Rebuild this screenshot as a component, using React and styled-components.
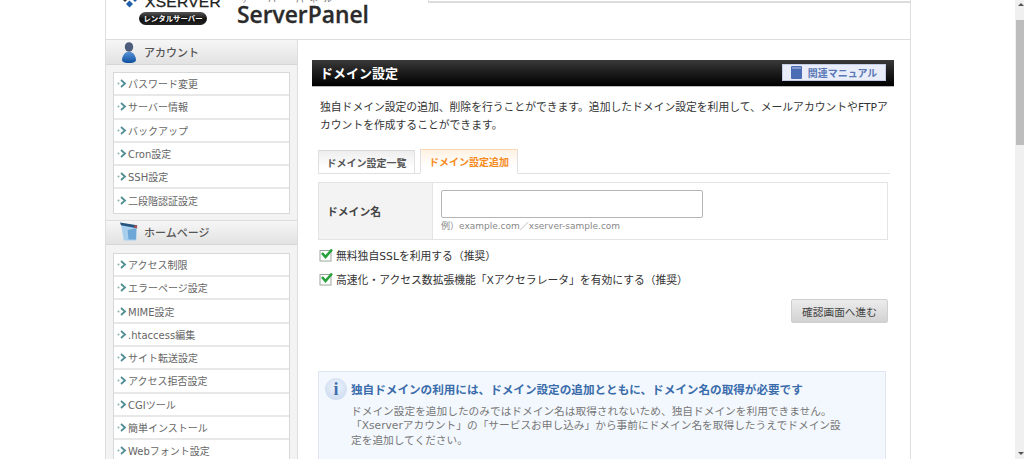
import styled, { createGlobalStyle } from "styled-components";

const GlobalStyle = createGlobalStyle`
  html, body {
    margin: 0;
    height: 100%;
    overflow: hidden;
    background: #fff;
  }
  body {
    font-family: "DejaVu Sans", "Noto Sans CJK JP", sans-serif;
    color: #333;
  }
`;

const Screen = styled.div`
  display: flex;
  width: 1024px;
  height: 459px;
  overflow: hidden;
`;

const Viewport = styled.div`
  flex: 1;
  padding-left: 105px;
  overflow: hidden;
`;

const Scrollbar = styled.div`
  position: relative;
  width: 9px;
  background: #f0f0f0;
`;

const ScrollThumb = styled.div`
  position: absolute;
  top: 20px;
  left: 1px;
  right: 0;
  height: 125px;
  background: #bdbdbd;
`;

const ScrollArrow = styled.div`
  position: absolute;
  left: 3px;
  ${(p) => (p.$down ? "bottom: 4px;" : "top: 3px;")}
  border-left: 3px solid transparent;
  border-right: 3px solid transparent;
  ${(p) => (p.$down ? "border-top: 3px solid #555;" : "border-bottom: 3px solid #555;")}
`;

const Page = styled.div`
  width: 806px;
  height: 459px;
  box-sizing: border-box;
  border-left: 1px solid #dedede;
  border-right: 1px solid #dedede;
  overflow: hidden;
`;

const Header = styled.header`
  position: relative;
  display: flex;
  align-items: flex-end;
  height: 40px;
  box-sizing: border-box;
  padding: 0 0 14px 16px;
  border-bottom: 1px solid #dcdcdc;
  overflow: hidden;
`;

const HeaderStrip = styled.div`
  position: absolute;
  top: 0;
  right: 0;
  width: 482px;
  height: 3px;
  box-sizing: border-box;
  background: #fff;
  border-left: 1px solid #ddd;
  border-bottom: 2px solid #dcdcdc;
`;

const XserverLogo = styled.div`
  display: flex;
  flex-direction: column;
  align-items: flex-start;
  width: 100px;
  margin-right: 15px;
`;

const LogoTop = styled.div`
  display: flex;
  align-items: flex-end;
  gap: 7px;
  height: 12px;
  margin-bottom: 4px;
`;

const LogoName = styled.span`
  font-family: "Liberation Sans", sans-serif;
  font-size: 15.5px;
  line-height: 12px;
  letter-spacing: 0.3px;
  color: #222;
  position: relative;
  top: 0;
  -webkit-text-stroke: 0.3px #222;
`;

const LogoPill = styled.span`
  display: block;
  width: 68px;
  height: 13px;
  margin-left: 17px;
  border-radius: 7px;
  background: linear-gradient(#555, #111 55%, #222);
  color: #fff;
  font-size: 7.4px;
  font-weight: 700;
  line-height: 13px;
  text-align: center;
`;

const PanelLogo = styled.div`
  display: flex;
  flex-direction: column;
  align-items: flex-start;
`;

const PanelKana = styled.span`
  font-size: 8px;
  line-height: 8px;
  letter-spacing: 6px;
  color: #666;
  margin: 0 0 1px 3px;
`;

const PanelName = styled.span`
  font-family: "Open Sans", sans-serif;
  font-size: 22.8px;
  font-weight: 600;
  line-height: 20px;
  color: #2b2b2b;
  -webkit-text-stroke: 0.3px #2b2b2b;
`;

const Body = styled.div`
  display: flex;
  height: 419px;
`;

const Sidebar = styled.aside`
  width: 191px;
  flex: none;
  background: #f3f3f3;
  border-right: 1px solid #dedede;
  overflow: hidden;
`;

const SideHead = styled.div`
  display: flex;
  align-items: center;
  height: 25px;
  box-sizing: border-box;
  padding-left: ${(p) => p.$pad}px;
  gap: ${(p) => p.$gap}px;
  background: linear-gradient(#f6f6f6, #e2e2e2);
  border-top: ${(p) => (p.$first ? "0" : "1px solid #dcdcdc")};
  border-bottom: 1px solid #d6d6d6;
  color: #555;
  font-size: 11px;
  font-weight: 500;
`;

const SideList = styled.ul`
  list-style: none;
  margin: ${(p) => p.$top}px 7px 6px 7px;
  padding: 0;
  background: #fff;
  border: 1px solid #d8d8d8;
`;

const SideItem = styled.li`
  display: flex;
  align-items: center;
  gap: 1px;
  height: 23.3px;
  box-sizing: border-box;
  padding-left: 3px;
  border-bottom: 2px solid #e8e8e8;
  color: #666;
  font-size: 10px;
  white-space: nowrap;

  &:last-child {
    border-bottom-color: transparent;
  }
`;

const Main = styled.main`
  flex: 1;
  padding: 20px 16px 0 14px;
  overflow: hidden;
`;

const TitleBar = styled.div`
  display: flex;
  align-items: center;
  justify-content: space-between;
  height: 27px;
  box-sizing: border-box;
  padding: 0 8px 1px;
  background: linear-gradient(#3a3a3a, #1e1e1e 45%, #000);
  border-bottom: 1px solid #bbb;
`;

const Title = styled.h1`
  margin: 0;
  color: #fff;
  font-size: 13px;
  font-weight: 700;
`;

const ManualButton = styled.a`
  display: flex;
  align-items: center;
  justify-content: center;
  gap: 6px;
  width: 104px;
  height: 17px;
  box-sizing: border-box;
  margin-top: -1px;
  background: #e9edf9;
  border: 1px solid #c3cde6;
  color: #5a78b6;
  font-size: 10px;
  font-weight: 700;
`;

const Content = styled.div`
  padding: 0 6px;
`;

const Lead = styled.p`
  margin: 12px 0 0 2px;
  width: 570px;
  font-size: 10.8px;
  line-height: 18px;
  color: #333;
`;

const Tabs = styled.div`
  display: flex;
  align-items: flex-end;
  gap: 5px;
  height: 25px;
  margin: 13px -2px 0 0;
  border-bottom: 1px solid #e0e0e0;
`;

const Tab = styled.div`
  display: flex;
  align-items: center;
  justify-content: center;
  width: ${(p) => (p.$active ? 98 : 97)}px;
  height: ${(p) => (p.$active ? 25 : 23)}px;
  box-sizing: border-box;
  margin-bottom: ${(p) => (p.$active ? -1 : 0)}px;
  border: 1px solid #e0e0e0;
  border-bottom: ${(p) => (p.$active ? "1px solid #fff" : "0")};
  border-top-color: ${(p) => (p.$active ? "#fbd9b5" : "#d8d8d8")};
  background: ${(p) =>
    p.$active ? "linear-gradient(#fff1e2, #fff 70%)" : "linear-gradient(#eeeeee, #fff 80%)"};
  color: ${(p) => (p.$active ? "#f58a21" : "#555")};
  font-size: 10px;
  font-weight: 700;
`;

const FormTable = styled.div`
  display: flex;
  height: 58px;
  box-sizing: border-box;
  margin-top: 8px;
  border: 1px solid #e4e4e4;
`;

const FormLabel = styled.div`
  display: flex;
  align-items: center;
  width: 114px;
  box-sizing: border-box;
  padding-left: 8px;
  background: #f3f3f3;
  border-right: 1px solid #e4e4e4;
  color: #444;
  font-size: 10.8px;
  font-weight: 700;
`;

const FormField = styled.div`
  display: flex;
  flex-direction: column;
  padding: 7px 0 0 8px;
`;

const TextInput = styled.input`
  display: block;
  width: 262px;
  height: 28px;
  box-sizing: border-box;
  border: 1px solid #b5b5b5;
  border-radius: 2px;
  background: #fff;
`;

const Hint = styled.span`
  margin-top: 1px;
  color: #888;
  font-size: 9px;
  line-height: 14px;
  white-space: nowrap;
`;

const CheckRow = styled.label`
  display: flex;
  align-items: center;
  gap: 2px;
  height: 24px;
  padding-left: 1px;
  color: #333;
  font-size: 10.8px;
`;

const CheckGroup = styled.div`
  margin-top: 3px;
`;

const ActionRow = styled.div`
  display: flex;
  justify-content: flex-end;
  margin-top: 8px;
`;

const ConfirmButton = styled.button`
  width: 97px;
  height: 24px;
  padding: 0;
  border: 1px solid #cfcfcf;
  border-radius: 2px;
  background: linear-gradient(#ececec, #d2d2d2);
  color: #444;
  font-family: inherit;
  font-size: 10.7px;
`;

const Notice = styled.section`
  width: 568px;
  box-sizing: border-box;
  height: 100px;
  margin-top: 48px;
  padding: 6px 0 0 6px;
  background: #f3f8fe;
  border: 1px solid #e0e6ee;
`;

const NoticeHead = styled.div`
  display: flex;
  align-items: center;
  gap: 4px;
  height: 22px;
`;

const InfoBadge = styled.span`
  display: flex;
  align-items: center;
  justify-content: center;
  width: 22px;
  height: 22px;
  border-radius: 50%;
  background: radial-gradient(circle at 50% 40%, #eef3fb, #c5d6ee);
  color: #3f6fae;
  font-family: "Liberation Serif", serif;
  font-size: 18px;
  font-weight: 700;
`;

const NoticeTitle = styled.strong`
  color: #3a6cab;
  font-size: 11.6px;
  font-weight: 700;
  white-space: nowrap;
`;

const NoticeText = styled.p`
  margin: 5px 0 0 26px;
  width: 497px;
  color: #777;
  font-size: 10.7px;
  line-height: 14.4px;
`;

function Bullet() {
  return (
    <svg width="10" height="9" viewBox="0 0 10 9" style={{ flex: "none" }}>
      <circle cx="1.5" cy="4.5" r="1" fill="#7fb0b0" />
      <path d="M4 1 L8 4.5 L4 8" fill="none" stroke="#4f8e94" strokeWidth="1.8" />
    </svg>
  );
}

function PersonIcon() {
  return (
    <svg width="14" height="21" viewBox="0 0 14 21">
      <defs>
        <linearGradient id="personBody" x1="0" y1="0" x2="0" y2="1">
          <stop offset="0" stopColor="#5a93d8" />
          <stop offset="1" stopColor="#0c4f9e" />
        </linearGradient>
      </defs>
      <ellipse cx="7" cy="5" rx="4.2" ry="4.8" fill="#4c5c7a" />
      <path d="M3 11 C4 9.5 10 9.5 11 11 C13 13 14 16 14 18 C14 20.5 10 21 7 21 C4 21 0 20.5 0 18 C0 16 1 13 3 11 Z" fill="url(#personBody)" />
    </svg>
  );
}

function SheetIcon() {
  return (
    <svg width="18" height="20" viewBox="0 0 19 20">
      <path d="M1 2 L18 5 L17 19 L4 19 Z" fill="#a8d0ee" />
      <path d="M8 8 L17 6 L17 18 L9 18 Z" fill="#6ea6d8" />
      <path d="M0 0 L18 3 L18 6 L1 3 Z" fill="#27537f" />
      <path d="M15 3 L18 3.5 L18 6 L15 5.5 Z" fill="#b0504a" />
    </svg>
  );
}

function BookIcon() {
  return (
    <svg width="11" height="13" viewBox="0 0 11 13">
      <rect x="0" y="0" width="11" height="13" rx="1" fill="#4a6db3" />
      <rect x="1" y="1.5" width="9" height="1" fill="#b9c7e6" />
    </svg>
  );
}

function CheckIcon() {
  return (
    <svg width="15" height="14" viewBox="0 0 15 14" style={{ flex: "none" }}>
      <rect x="1" y="2.5" width="11" height="10.5" fill="#fff" stroke="#9aa89a" />
      <path d="M3 5 L6.5 9 L13 1.5" fill="none" stroke="#27a13a" strokeWidth="2.6" />
    </svg>
  );
}

function DiamondMark() {
  return (
    <svg width="16" height="10" viewBox="0 0 16 10">
      <path d="M0 1 L3 -2 L6 1 L3 4 Z" fill="#333" />
      <path d="M4 6 L7.5 2.5 L11 6 L7.5 9.5 Z" fill="#1f5ea8" />
      <path d="M10 1 L13 -2 L16 1 L13 4 Z" fill="#1f5ea8" />
    </svg>
  );
}

const accountMenu = ["パスワード変更", "サーバー情報", "バックアップ", "Cron設定", "SSH設定", "二段階認証設定"];
const homeMenu = [
  "アクセス制限",
  "エラーページ設定",
  "MIME設定",
  ".htaccess編集",
  "サイト転送設定",
  "アクセス拒否設定",
  "CGIツール",
  "簡単インストール",
  "Webフォント設定",
];

function Menu({ items, top }) {
  return (
    <SideList $top={top}>
      {items.map((item) => (
        <SideItem key={item}>
          <Bullet />
          {item}
        </SideItem>
      ))}
    </SideList>
  );
}

export default function App() {
  return (
    <>
      <GlobalStyle />
      <Screen>
        <Viewport>
          <Page>
            <Header>
              <HeaderStrip />
              <XserverLogo>
                <LogoTop>
                  <DiamondMark />
                  <LogoName>XSERVER</LogoName>
                </LogoTop>
                <LogoPill>レンタルサーバー</LogoPill>
              </XserverLogo>
              <PanelLogo>
                <PanelKana>サーバーパネル</PanelKana>
                <PanelName>ServerPanel</PanelName>
              </PanelLogo>
            </Header>
            <Body>
              <Sidebar>
                <SideHead $first $pad={16} $gap={8}>
                  <PersonIcon />
                  アカウント
                </SideHead>
                <Menu items={accountMenu} top={7} />
                <SideHead $pad={14} $gap={6}>
                  <SheetIcon />
                  ホームページ
                </SideHead>
                <Menu items={homeMenu} top={8} />
              </Sidebar>
              <Main>
                <TitleBar>
                  <Title>ドメイン設定</Title>
                  <ManualButton>
                    <BookIcon />
                    関連マニュアル
                  </ManualButton>
                </TitleBar>
                <Content>
                  <Lead>
                    独自ドメイン設定の追加、削除を行うことができます。追加したドメイン設定を利用して、メールアカウントやFTPアカウントを作成することができます。
                  </Lead>
                  <Tabs>
                    <Tab>ドメイン設定一覧</Tab>
                    <Tab $active>ドメイン設定追加</Tab>
                  </Tabs>
                  <FormTable>
                    <FormLabel>ドメイン名</FormLabel>
                    <FormField>
                      <TextInput type="text" />
                      <Hint>例）example.com／xserver-sample.com</Hint>
                    </FormField>
                  </FormTable>
                  <CheckGroup>
                    <CheckRow>
                      <CheckIcon />
                      無料独自SSLを利用する（推奨）
                    </CheckRow>
                    <CheckRow>
                      <CheckIcon />
                      高速化・アクセス数拡張機能「Xアクセラレータ」を有効にする（推奨）
                    </CheckRow>
                  </CheckGroup>
                  <ActionRow>
                    <ConfirmButton>確認画面へ進む</ConfirmButton>
                  </ActionRow>
                  <Notice>
                    <NoticeHead>
                      <InfoBadge>i</InfoBadge>
                      <NoticeTitle>独自ドメインの利用には、ドメイン設定の追加とともに、ドメイン名の取得が必要です</NoticeTitle>
                    </NoticeHead>
                    <NoticeText>
                      ドメイン設定を追加したのみではドメイン名は取得されないため、独自ドメインを利用できません。「Xserverアカウント」の「サービスお申し込み」から事前にドメイン名を取得したうえでドメイン設定を追加してください。
                    </NoticeText>
                  </Notice>
                </Content>
              </Main>
            </Body>
          </Page>
        </Viewport>
        <Scrollbar>
          <ScrollArrow />
          <ScrollThumb />
          <ScrollArrow $down />
        </Scrollbar>
      </Screen>
    </>
  );
}
